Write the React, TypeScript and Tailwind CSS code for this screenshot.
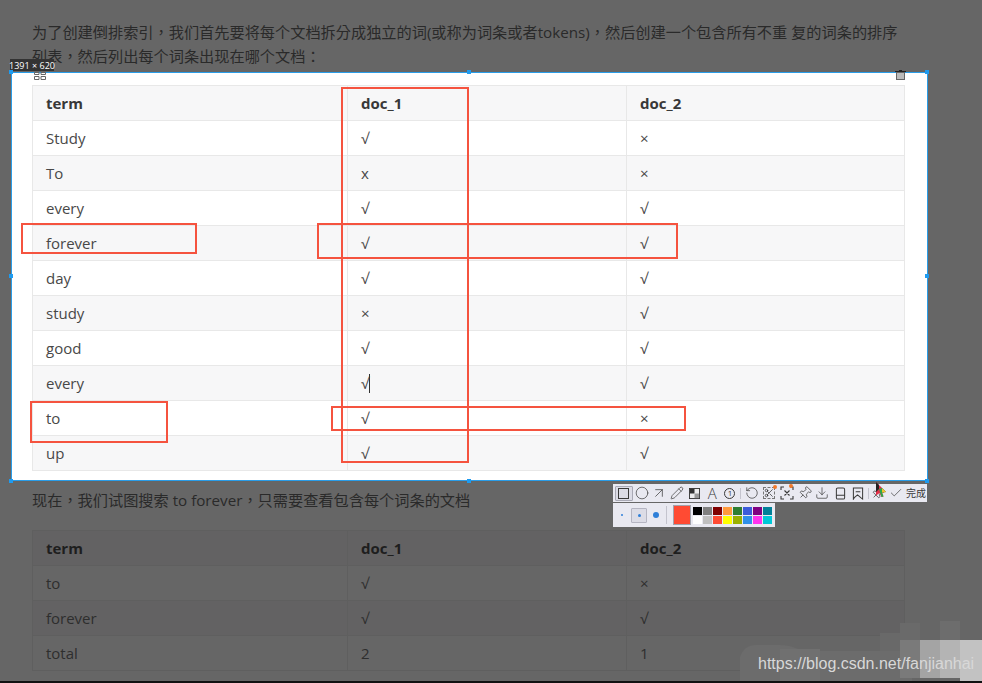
import { Circle, ArrowUpRight, Pencil, RotateCcw, Scissors, Pin, Download, Check } from 'lucide-react';

const FONT = "font-['Open_Sans','Noto_Sans_CJK_TC',sans-serif]";

const TOP_ROWS = [
  ['Study', '√', '×'],
  ['To', 'x', '×'],
  ['every', '√', '√'],
  ['forever', '√', '√'],
  ['day', '√', '√'],
  ['study', '×', '√'],
  ['good', '√', '√'],
  ['every', '√', '√'],
  ['to', '√', '×'],
  ['up', '√', '√'],
];

const BOTTOM_ROWS = [
  ['to', '√', '×'],
  ['forever', '√', '√'],
  ['total', '2', '1'],
];

const PALETTE = [
  'bg-black', 'bg-[#808080]', 'bg-[#800000]', 'bg-[#ff9a3c]', 'bg-[#2e7d32]', 'bg-[#3b5bdb]', 'bg-[#800080]', 'bg-[#008099]',
  'bg-white', 'bg-[#c0c0c0]', 'bg-[#ff4b33]', 'bg-[#ffff00]', 'bg-[#9ab000]', 'bg-[#3090e8]', 'bg-[#ff33ee]', 'bg-[#00c8d8]',
];

// annotations drawn on top of the screenshot
const MARKS = [
  'left-[341px] top-[87px] w-[128px] h-[376px]',
  'left-[21px] top-[223px] w-[176px] h-[31px]',
  'left-[317px] top-[223px] w-[361px] h-[36px]',
  'left-[30px] top-[401px] w-[138px] h-[42px]',
  'left-[331px] top-[406px] w-[355px] h-[25px]',
];

const HANDLES = [
  'left-[9px] top-[70px]', 'left-[467px] top-[70px]', 'left-[925px] top-[70px]',
  'left-[9px] top-[274px]', 'left-[925px] top-[274px]',
  'left-[9px] top-[479px]', 'left-[467px] top-[479px]', 'left-[925px] top-[479px]',
];

function DataTable({ rows, dim }: { rows: string[][]; dim?: boolean }) {
  const border = dim ? 'border-[#5f5f5f]' : 'border-[#e8e8e8]';
  const shade = dim ? 'bg-[#636263]' : 'bg-[#f7f7f8]';
  const text = dim ? 'text-[#2e2e2e]' : 'text-[#484848]';

  return (
    <table className={`w-[872px] table-fixed border-collapse text-[15px] ${text}`}>
      <colgroup>
        <col className="w-[315px]" />
        <col className="w-[279px]" />
        <col className="w-[278px]" />
      </colgroup>
      <thead>
        <tr className={`h-[35px] ${shade}`}>
          {['term', 'doc_1', 'doc_2'].map((h) => (
            <th key={h} className={`border ${border} px-[13px] py-0 text-left font-bold ${dim ? 'text-[#1e1e1e]' : 'text-[#383838]'}`}>
              {h}
            </th>
          ))}
        </tr>
      </thead>
      <tbody>
        {rows.map((row, idx) => (
          <tr key={idx} className={`h-[35px] ${idx % 2 === 1 ? shade : ''}`}>
            {row.map((cell, i) => (
              <td key={i} className={`border ${border} px-[13px] py-0`}>
                {cell}
              </td>
            ))}
          </tr>
        ))}
      </tbody>
    </table>
  );
}

function ToolButton({ children, active }: { children: React.ReactNode; active?: boolean }) {
  return (
    <div className={`flex h-[15px] w-[17.7px] shrink-0 items-center justify-center ${active ? 'rounded-[1px] border border-[#a9a9b5] bg-[#dcdce6]' : ''}`}>
      {children}
    </div>
  );
}

function Toolbar() {
  const icon = 'h-[14px] w-[14px] text-[#3a3a3a]';
  return (
    <div className="absolute left-[613px] top-[484px] flex h-[18px] w-[314px] items-center bg-[#e9e9f1] pl-[2px]">
      <ToolButton active>
        <div className="h-[11px] w-[11px] border border-[#3a3a3a]" />
      </ToolButton>
      <ToolButton><Circle className={icon} strokeWidth={1.2} /></ToolButton>
      <ToolButton><ArrowUpRight className="h-[16px] w-[16px] text-[#3a3a3a]" strokeWidth={1.1} /></ToolButton>
      <ToolButton><Pencil className={icon} strokeWidth={1.2} /></ToolButton>
      <ToolButton>
        <svg viewBox="0 0 12 12" className="h-[11px] w-[11px]">
          <rect x="0.5" y="0.5" width="11" height="11" fill="#eee" stroke="#333" />
          <rect x="1" y="1" width="5" height="5" fill="#333" />
          <rect x="6" y="6" width="5" height="5" fill="#999" />
        </svg>
      </ToolButton>
      <ToolButton>
        <span className="text-[15px] leading-none font-light text-[#3a3a3a]">A</span>
      </ToolButton>
      <ToolButton>
        <div className="flex h-[11px] w-[11px] items-center justify-center rounded-full border border-[#3a3a3a] text-[8px] leading-none text-[#3a3a3a]">1</div>
      </ToolButton>
      <div className="mx-[1px] h-[11px] w-px bg-[#c4c4ce]" />
      <div className="w-[1px]" />
      <ToolButton><RotateCcw className={icon} strokeWidth={1.2} /></ToolButton>
      <ToolButton>
        <div className="relative">
          <div className="flex h-[12px] w-[12px] items-center justify-center border border-dashed border-[#777]">
            <Scissors className="h-[10px] w-[10px] text-[#222]" strokeWidth={1.6} />
          </div>
          <div className="absolute -right-[2px] -top-[2px] h-[4px] w-[4px] rounded-full bg-[#f47a2a]" />
        </div>
      </ToolButton>
      <ToolButton>
        <div className="relative">
          <svg viewBox="0 0 14 14" className={icon} fill="none" stroke="currentColor" strokeWidth="1.1">
            <path d="M1 4V1h3M10 1h3v3M13 10v3h-3M4 13H1v-3M4.5 4.5l5 5M9.5 4.5l-5 5" />
          </svg>
          <div className="absolute right-[1px] -top-[2px] h-[4px] w-[4px] rounded-full bg-[#f47a2a]" />
        </div>
      </ToolButton>
      <ToolButton><Pin className={`${icon} rotate-45`} strokeWidth={1.2} /></ToolButton>
      <ToolButton><Download className={icon} strokeWidth={1.2} /></ToolButton>
      <ToolButton>
        <svg viewBox="0 0 12 14" className="h-[13px] w-[11px]" fill="none" stroke="#3a3a3a" strokeWidth="1.1">
          <path d="M1.5 2.5a1.5 1.5 0 0 1 1.5-1.5h6a1.5 1.5 0 0 1 1.5 1.5v9a1.5 1.5 0 0 1-1.5 1.5h-6a1.5 1.5 0 0 1-1.5-1.5zM1.5 9h9" />
        </svg>
      </ToolButton>
      <ToolButton>
        <svg viewBox="0 0 13 14" className="h-[13px] w-[12px]" fill="none" stroke="#3a3a3a" strokeWidth="1.1">
          <path d="M1.5 1h10v12l-2-1.5-3.500-3-3.500 3-1 1.500zM4 5h5" />
        </svg>
      </ToolButton>
      <div className="mx-[1px] h-[11px] w-px bg-[#c4c4ce]" />
      <ToolButton><Pin className={`${icon} rotate-45`} strokeWidth={1.2} /></ToolButton>
      <ToolButton><Check className={icon} strokeWidth={1.2} /></ToolButton>
      <span className="ml-[1px] text-[10px] leading-none font-['Noto_Sans_CJK_SC',sans-serif] text-[#3a3a3a]">完成</span>
    </div>
  );
}

function ColorBar() {
  return (
    <div className="absolute left-[613px] top-[503px] flex h-[24px] w-[162px] items-center bg-[#e9e9f1]">
      <div className="flex w-[18px] justify-center">
        <div className="h-[2px] w-[2px] rounded-full bg-[#2f7fd8]" />
      </div>
      <div className="flex h-[15px] w-[16px] items-center justify-center rounded-[1px] border border-[#b5b5c2] bg-[#dcdce6]">
        <div className="h-[3px] w-[3px] rounded-full bg-[#2f7fd8]" />
      </div>
      <div className="flex w-[18px] justify-center">
        <div className="h-[6px] w-[6px] rounded-full bg-[#2f7fd8]" />
      </div>
      <div className="ml-[1px] h-[18px] w-px bg-[#c4c4ce]" />
      <div className="ml-[6px] h-[20px] w-[18px] border border-[#a3a3ad] bg-[#ff4b33]" />
      <div className="ml-[2px] grid grid-cols-[repeat(8,9px)] gap-[1px]">
        {PALETTE.map((c) => (
          <div key={c} className={`h-[8px] w-[9px] ${c}`} />
        ))}
      </div>
    </div>
  );
}

function Watermark() {
  return (
    <>
      <svg viewBox="0 0 250 62" className="absolute left-[732px] top-[621px] h-[62px] w-[250px]">
        <path d="M8 61V36q4-12 16-12h24q12 0 22 6h110v31z" fill="#6c6c6c" />
        <rect x="48" y="28" width="40" height="33" fill="#707070" />
        <rect x="148" y="12" width="20" height="18" fill="#696969" />
        <rect x="168" y="2" width="20" height="17" fill="#6a6a6a" />
        <rect x="208" y="0" width="20" height="19" fill="#6d6d6d" />
        <rect x="168" y="19" width="20" height="38" fill="#7a7a7a" />
        <rect x="188" y="19" width="20" height="38" fill="#a4a4a4" />
        <rect x="208" y="19" width="20" height="38" fill="#b4b4b4" />
        <rect x="228" y="19" width="22" height="42" fill="#c2c2c2" />
      </svg>
      <div className="absolute left-[758px] top-[654px] font-['Liberation_Sans',sans-serif] text-[16px] leading-[20px] text-[#d8d8d8]">
        https://blog.csdn.net/fanjianhai
      </div>
    </>
  );
}

export default function App() {
  return (
    <div className={`relative h-[683px] w-[982px] overflow-hidden bg-[#666666] ${FONT}`}>
      <div className="px-[32px] pt-[20px]">
        <p className="w-[873px] text-[15.2px] leading-[24px] text-[#2a2a2a]">
          为了创建倒排索引，我们首先要将每个文档拆分成独立的词(或称为词条或者tokens)，然后创建一个包含所有不重 复的词条的排序列表，然后列出每个词条出现在哪个文档：
        </p>

        {/* selected area of the capture */}
        <div className="ml-[-21px] mt-[4px] w-[917px] border border-[#2a9de8] bg-white pb-[9px] pl-[20px] pt-[12px]">
          <DataTable rows={TOP_ROWS} />
        </div>

        <p className="mt-[7px] text-[15.2px] leading-[24px] text-[#2a2a2a]">
          现在，我们试图搜索 to forever，只需要查看包含每个词条的文档
        </p>

        <div className="mt-[18px]">
          <DataTable rows={BOTTOM_ROWS} dim />
        </div>
      </div>

      {/* capture size label, handles and corner icons */}
      <div className="absolute left-[10px] top-[59px] flex h-[12px] w-[44px] items-center justify-center whitespace-nowrap bg-[#333] text-[9px] leading-none text-white">
        1391 × 620
      </div>
      {HANDLES.map((h) => (
        <div key={h} className={`absolute h-[4px] w-[4px] bg-[#1e9bf0] ${h}`} />
      ))}
      <svg viewBox="0 0 12 8" className="absolute left-[34px] top-[72px] h-[8px] w-[12px]" fill="none" stroke="#666">
        <path d="M.5 .5h4.500v2h-4.500zM7 .5h4.500v2h-4.500zM.5 4.500h4.500v3h-4.500zM7 4.500h4.500v3h-4.500z" />
      </svg>
      <svg viewBox="0 0 11 11" className="absolute left-[895px] top-[69px] h-[11px] w-[11px]">
        <path d="M0 2h11v1H0zM4 1h3v1H4z" fill="#222" />
        <rect x="1.500" y="3.500" width="8" height="7" fill="#bbb" stroke="#666" />
      </svg>

      {/* red rectangles */}
      {MARKS.map((m) => (
        <div key={m} className={`absolute border-2 border-[#f5533f] ${m}`} />
      ))}

      {/* text caret in the every row */}
      <div className="absolute left-[369px] top-[374px] h-[19px] w-px bg-[#333]" />

      <Toolbar />
      <ColorBar />

      {/* mouse pointer */}
      <svg viewBox="0 0 10 15" className="absolute left-[876px] top-[482px] h-[15px] w-[10px]">
        <path d="M0 0l10 10-4 .5 1.500 4-2 .5-2-4-3.500 2.500z" fill="#e0304a" />
        <path d="M0 0l3 3v4L0 10z" fill="#222" />
        <path d="M3 7l3-1 4 4-4 .5 1.500 4-2 .5z" fill="#2ca84a" />
        <path d="M6 6l2 2 2 2-4 .5z" fill="#f2c230" />
      </svg>

      <Watermark />

      {/* window edge */}
      <div className="absolute bottom-0 left-0 h-[2px] w-full bg-[#111]" />
    </div>
  );
}
